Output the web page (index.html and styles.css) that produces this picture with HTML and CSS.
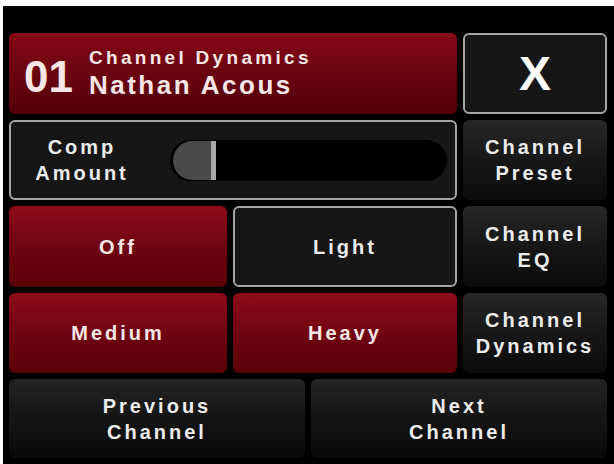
FILE: index.html
```
<!DOCTYPE html>
<html>
<head lang="en">
    <meta charset="UTF-8">
    <title>Channel Dynamics</title>

    <link rel="stylesheet" href="styles.css">

</head>
<body>

    <div class="screen">
        <div class="panel">

            <!-- channel title -->
            <div class="box red title">
                <span class="num">01</span>
                <div class="names">
                    <div class="sub">Channel Dynamics</div>
                    <div class="name">Nathan Acous</div>
                </div>
            </div>
            <div class="box framed close">X</div>

            <!-- compressor amount -->
            <div class="box framed comp">
                <div class="label">Comp<br>Amount</div>
                <div class="track">
                    <div class="knob"></div>
                </div>
            </div>
            <div class="box dark">Channel<br>Preset</div>

            <!-- presets -->
            <div class="box red">Off</div>
            <div class="box framed">Light</div>
            <div class="box dark">Channel<br>EQ</div>

            <div class="box red">Medium</div>
            <div class="box red">Heavy</div>
            <div class="box dark">Channel<br>Dynamics</div>

            <!-- navigation -->
            <div class="nav">
                <div class="box dark">Previous<br>Channel</div>
                <div class="box dark">Next<br>Channel</div>
            </div>

        </div>
    </div>

</body>
</html>
```

FILE: styles.css
```
*{
    margin: 0px;
    padding: 0px;
    box-sizing: border-box;
}

body{
    background: #fff;
    padding: 6px 0 0 3px;
    font-family: "Liberation Sans", Arial, sans-serif;
}

.screen{
    width: 611px;
    height: 458px;
    background: #000;
    overflow: hidden;
}

.panel{
    padding: 27px 7px 0 6px;
    display: grid;
    grid-template-columns: 218px 224px 144px;
    grid-template-rows: 81px 80px 81px 80px 79px;
    gap: 6px;
}

.box{
    border-radius: 6px;
    display: flex;
    align-items: center;
    justify-content: center;
    text-align: center;
    color: #ececec;
    font-size: 20px;
    font-weight: bold;
    letter-spacing: 3px;
    line-height: 26px;
}

.red{
    background: linear-gradient(to bottom, #8e0b1a, #6e0411 55%, #580008);
    color: #f6e6e6;
}

.dark{
    background: linear-gradient(to bottom, #272727, #171717 50%, #0b0b0b);
}

.framed{
    background: #161616;
    border: 2px solid #a4a4a4;
}

/* header */
.title{
    grid-column: 1 / 3;
    justify-content: flex-start;
    padding-left: 15px;
    text-align: left;
    background: linear-gradient(to bottom, #870816, #6a0410 50%, #520008);
}

.title .num{
    font-size: 44px;
    letter-spacing: 0;
    margin-right: 16px;
    margin-top: 6px;
}

.title .sub{
    font-size: 19px;
    letter-spacing: 3.3px;
    line-height: 22px;
}

.title .name{
    font-size: 26px;
    letter-spacing: 2.5px;
    line-height: 32px;
}

.close{
    font-size: 48px;
    letter-spacing: 0;
    color: #fff;
}

/* comp slider */
.comp{
    grid-column: 1 / 3;
    justify-content: flex-start;
}

.comp .label{
    width: 140px;
    padding-left: 2px;
}

.track{
    width: 277px;
    height: 41px;
    margin-left: 19px;
    background: #000;
    border-radius: 21px;
    padding: 1px 0 1px 3px;
}

.knob{
    width: 43px;
    height: 39px;
    background: #4a4a4a;
    border-radius: 20px 0 0 20px;
    border-right: 5px solid #a8a8a8;
}

/* bottom row */
.nav{
    grid-column: 1 / 4;
    display: grid;
    grid-template-columns: 1fr 1fr;
    gap: 6px;
}

.nav .box{
    background: linear-gradient(to bottom, #242424, #141414 50%, #090909);
}
```
